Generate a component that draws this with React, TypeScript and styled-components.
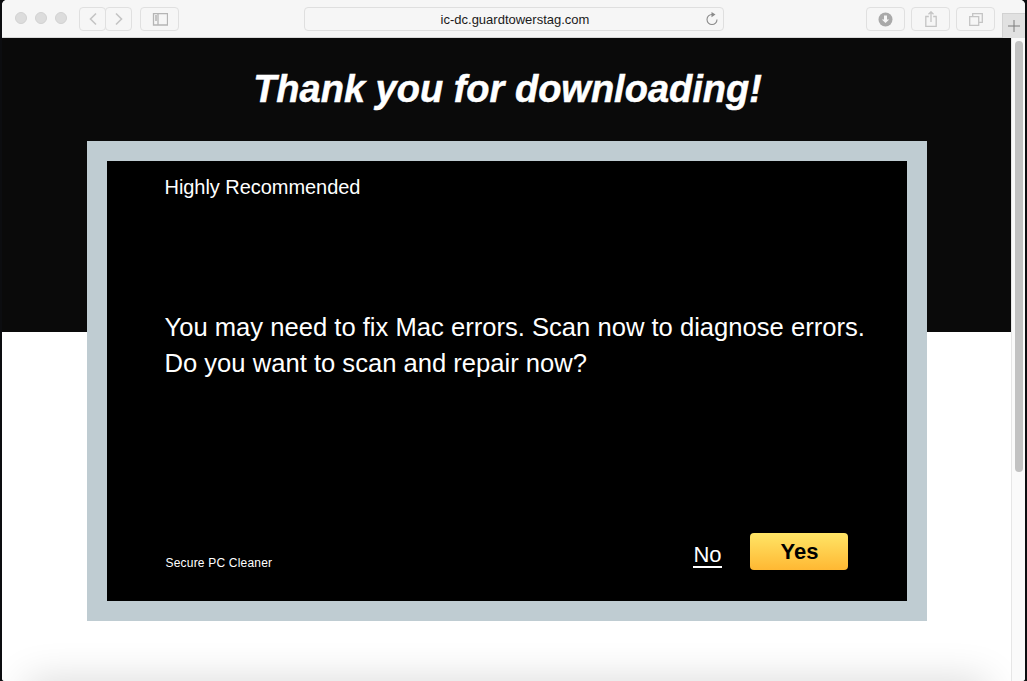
import { createGlobalStyle } from "styled-components";
import styled from "styled-components";

const GlobalStyle = createGlobalStyle`
  html, body {
    margin: 0;
    height: 681px;
    overflow: hidden;
    background: #0c0d10;
  }
  #root { height: 681px; }
  * { box-sizing: border-box; }
`;

// ─── Browser chrome ───────────────────────────────────────────────────────────

const Window = styled.div`
  width: 1023px;
  height: 681px;
  margin-left: 2px;
  display: flex;
  flex-direction: column;
  overflow: hidden;
  border-radius: 5px 5px 3px 3px;
  background: #fff;
`;

const Toolbar = styled.div`
  height: 38px;
  flex: none;
  display: flex;
  align-items: flex-start;
  padding: 7px 0 0 13px;
  background: #f6f6f6;
  border-bottom: 1px solid #d9d9d9;
`;

const Lights = styled.div`
  display: flex;
  gap: 8px;
  margin-top: 5px;
  margin-right: 12px;
`;

const Light = styled.span`
  width: 12px;
  height: 12px;
  border-radius: 50%;
  background: #dcdcdc;
  border: 1px solid #d2d2d2;
`;

const ToolButton = styled.div<{ $w: number; $ml?: number }>`
  width: ${(p) => p.$w}px;
  margin-left: ${(p) => p.$ml ?? 0}px;
  height: 24px;
  flex: none;
  display: flex;
  align-items: center;
  justify-content: center;
  border: 1px solid #e0e0e0;
  border-radius: 4px;
  background: #f6f6f6;
`;

const AddressBar = styled.div`
  width: 420px;
  height: 24px;
  flex: none;
  margin-left: 125px;
  margin-right: 142px;
  padding: 0 4px 0 0;
  display: flex;
  align-items: center;
  background: #f6f6f6;
  border: 1px solid #dfdfdf;
  border-radius: 4px;
`;

const Url = styled.span`
  flex: 1;
  padding-left: 20px;
  text-align: center;
  font: 13px "Liberation Sans", Arial, sans-serif;
  color: #1a1a1a;
`;

const NewTab = styled.div`
  width: 23px;
  height: 25px;
  flex: none;
  margin: 6px 0 0 7px;
  display: flex;
  align-items: center;
  justify-content: center;
  background: #e1e1e1;
  border-left: 1px solid #d2d2d2;
  border-top: 1px solid #d2d2d2;
`;

// ─── Page ─────────────────────────────────────────────────────────────────────

const Viewport = styled.div`
  flex: 1;
  display: flex;
  min-height: 0;
`;

const Page = styled.main`
  width: 1009px;
  flex: none;
  display: flex;
  flex-direction: column;
  align-items: center;
  overflow: hidden;
  background: linear-gradient(#0a0a0a 294px, #fff 294px);
`;

const Title = styled.h1`
  margin: 0;
  padding: 32px 0 33px 2px;
  font: italic bold 38px/38px "Liberation Sans", Arial, sans-serif;
  color: #fff;
  white-space: nowrap;
  -webkit-text-stroke: 0.5px #fff;
`;

const Frame = styled.section`
  width: 840px;
  height: 480px;
  flex: none;
  padding: 20px;
  background: #bfccd2;
`;

const Dialog = styled.div`
  height: 100%;
  display: flex;
  flex-direction: column;
  padding: 14px 30px 31px 58px;
  background: #000;
  color: #fff;
  font-family: "Liberation Sans", Arial, sans-serif;
`;

const Eyebrow = styled.div`
  font-size: 20px;
  line-height: 24px;
  letter-spacing: -0.05px;
`;

const Message = styled.p`
  margin: 110px 0 0;
  font-size: 25.6px;
  line-height: 36px;
  white-space: nowrap;
`;

const Footer = styled.div`
  margin-top: auto;
  margin-right: 29px;
  display: flex;
  align-items: flex-end;
`;

const Brand = styled.span`
  margin-right: auto;
  margin-left: 1px;
  font-size: 12px;
  line-height: 13px;
  letter-spacing: 0.2px;
`;

const NoLink = styled.a`
  margin: 0 28px 2px 0;
  font-size: 22px;
  line-height: 22px;
  color: #fff;
  border-bottom: 2px solid #fff;
`;

const YesButton = styled.button`
  width: 98px;
  height: 37px;
  padding: 1px 0 0 2px;
  border: none;
  border-radius: 4px;
  background: linear-gradient(#ffe566, #ffb833);
  font: bold 22px "Liberation Sans", Arial, sans-serif;
  color: #000;
`;

const BottomPanel = styled.div`
  width: 960px;
  height: 40px;
  flex: none;
  margin-top: 60px;
  background: #fff;
  box-shadow: 0 0 40px rgba(0, 0, 0, 0.16);
`;

// ─── Scrollbar ────────────────────────────────────────────────────────────────

const Track = styled.div`
  flex: 1;
  padding: 3px 2px 0 3px;
  background: #fafafa;
  border-left: 1px solid #e6e6e6;
`;

const Thumb = styled.div`
  height: 431px;
  border-radius: 4px;
  background: #c2c2c2;
`;

// ─── Component ────────────────────────────────────────────────────────────────

const stroke = { fill: "none", stroke: "#c4c4c4", strokeWidth: 1.3 };

export default function App() {
  return (
    <>
      <GlobalStyle />
      <Window>
        <Toolbar>
          <Lights>
            <Light />
            <Light />
            <Light />
          </Lights>
          <ToolButton $w={27}>
            <svg width="10" height="14" viewBox="0 0 10 14">
              <path d="M8 1.5 2.5 7 8 12.5" {...stroke} strokeWidth={1.6} />
            </svg>
          </ToolButton>
          <ToolButton $w={27} $ml={-1}>
            <svg width="10" height="14" viewBox="0 0 10 14">
              <path d="M2 1.5 7.5 7 2 12.5" {...stroke} strokeWidth={1.6} />
            </svg>
          </ToolButton>
          <ToolButton $w={39} $ml={8}>
            <svg width="16" height="13" viewBox="0 0 16 13">
              <path d="M1.5.5h14v11.5h-14zM6 .5v11.5" {...stroke} stroke="#b5b5b5" />
              <path d="M3 3h2M3 5h2M3 7h2" {...stroke} stroke="#b5b5b5" />
            </svg>
          </ToolButton>
          <AddressBar>
            <Url>ic-dc.guardtowerstag.com</Url>
            <svg width="14" height="14" viewBox="0 0 14 14">
              <path d="M7 2.5a5 5 0 1 0 5 5" fill="none" stroke="#8a8a8a" strokeWidth="1.1" />
              <path d="M6.5 0 10.5 2.6 6.5 5.2z" fill="#8a8a8a" />
            </svg>
          </AddressBar>
          <ToolButton $w={39}>
            <svg width="15" height="15" viewBox="0 0 15 15">
              <circle cx="7.5" cy="7.5" r="7" fill="#a9a9a9" />
              <path d="M6 3.5h3v4h2.2l-3.7 3.6-3.7-3.6H6z" fill="#f6f6f6" />
            </svg>
          </ToolButton>
          <ToolButton $w={39} $ml={6}>
            <svg width="12" height="16" viewBox="0 0 12 16">
              <path d="M3.8 5.5H.8v10h10.4v-10h-3M6 11V1M3.5 3.2 6 .8l2.5 2.4" {...stroke} />
            </svg>
          </ToolButton>
          <ToolButton $w={39} $ml={6}>
            <svg width="14" height="13" viewBox="0 0 14 13">
              <path d="M.7 3.7h9v8.6h-9zM3.7 3.7V.7h9.6v8.6H9.7" {...stroke} />
            </svg>
          </ToolButton>
          <NewTab>
            <svg width="12" height="12" viewBox="0 0 12 12">
              <path d="M6 0v12M0 6h12" fill="none" stroke="#7d7d7d" strokeWidth="1" />
            </svg>
          </NewTab>
        </Toolbar>
        <Viewport>
          <Page>
            <Title>Thank you for downloading!</Title>
            <Frame>
              <Dialog>
                <Eyebrow>Highly Recommended</Eyebrow>
                <Message>
                  You may need to fix Mac errors. Scan now to diagnose errors.
                  <br />
                  Do you want to scan and repair now?
                </Message>
                <Footer>
                  <Brand>Secure PC Cleaner</Brand>
                  <NoLink>No</NoLink>
                  <YesButton>Yes</YesButton>
                </Footer>
              </Dialog>
            </Frame>
            <BottomPanel />
          </Page>
          <Track>
            <Thumb />
          </Track>
        </Viewport>
      </Window>
    </>
  );
}
